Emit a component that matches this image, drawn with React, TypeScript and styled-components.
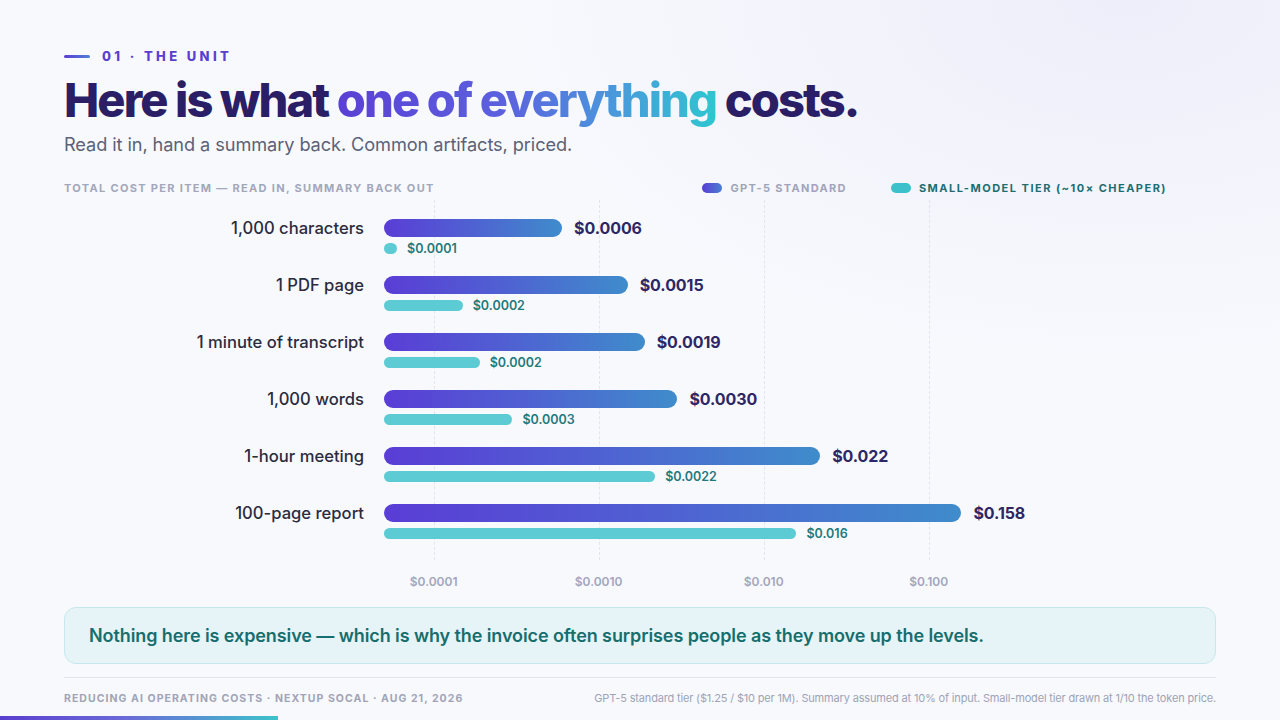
import React from "react";
import styled, { createGlobalStyle } from "styled-components";

const GlobalStyle = createGlobalStyle`
  html, body {
    margin: 0;
    padding: 0;
    background: #f8f9fd;
  }
  body {
    font-family: Inter, "Noto Sans", sans-serif;
    -webkit-font-smoothing: antialiased;
  }
`;

const MIN = Math.log10(0.00005);
const DECADE = 165;
const TRACK = 825;

const px = (v: number) => (Math.log10(v) - MIN) * DECADE;

type Item = { label: string; main: number; mainText: string; small: number; smallText: string };

const items: Item[] = [
  { label: "1,000 characters", main: 0.0006, mainText: "$0.0006", small: 0.00006, smallText: "$0.0001" },
  { label: "1 PDF page", main: 0.0015, mainText: "$0.0015", small: 0.00015, smallText: "$0.0002" },
  { label: "1 minute of transcript", main: 0.0019, mainText: "$0.0019", small: 0.00019, smallText: "$0.0002" },
  { label: "1,000 words", main: 0.003, mainText: "$0.0030", small: 0.0003, smallText: "$0.0003" },
  { label: "1-hour meeting", main: 0.022, mainText: "$0.022", small: 0.0022, smallText: "$0.0022" },
  { label: "100-page report", main: 0.158, mainText: "$0.158", small: 0.0158, smallText: "$0.016" },
];

const ticks = [
  { v: 0.0001, t: "$0.0001" },
  { v: 0.001, t: "$0.0010" },
  { v: 0.01, t: "$0.010" },
  { v: 0.1, t: "$0.100" },
];

const Slide = styled.div`
  position: relative;
  width: 1280px;
  height: 720px;
  overflow: hidden;
  box-sizing: border-box;
  padding: 47px 64px 0;
  display: flex;
  flex-direction: column;
  background:
    radial-gradient(ellipse 620px 360px at 88% 0%, #eeeefa 0%, rgba(248, 249, 253, 0) 100%),
    #f8f9fd;
`;

const Eyebrow = styled.div`
  display: flex;
  align-items: center;
  gap: 12px;
  height: 18px;
`;

const EyebrowLine = styled.span`
  width: 26px;
  height: 3px;
  border-radius: 2px;
  background: linear-gradient(90deg, #5a3fd0, #4f7fd8);
`;

const EyebrowText = styled.span`
  font-size: 13px;
  font-weight: 800;
  letter-spacing: 0.26em;
  color: #5a3fd0;
`;

const Title = styled.h1`
  margin: 7px 0 0;
  font-size: 47px;
  line-height: 56px;
  font-weight: 800;
  letter-spacing: -0.04em;
  color: #2a1f66;
`;

const Accent = styled.span`
  background: linear-gradient(90deg, #5a3fd6 0%, #5c62de 45%, #4a97dc 72%, #2fc6d0 100%);
  -webkit-background-clip: text;
  background-clip: text;
  color: transparent;
`;

const Subtitle = styled.p`
  margin: 3px 0 0;
  font-size: 18.2px;
  line-height: 26px;
  font-weight: 400;
  color: #5b6178;
  letter-spacing: -0.005em;
`;

const ChartHead = styled.div`
  margin-top: 23px;
  display: flex;
  align-items: center;
  height: 16px;
`;

const Caps = styled.span<{ $color: string; $size?: number; $track?: number }>`
  font-size: ${(p) => p.$size ?? 11}px;
  font-weight: 700;
  letter-spacing: ${(p) => p.$track ?? 0.12}em;
  color: ${(p) => p.$color};
  text-transform: uppercase;
`;

const Legend = styled.div`
  margin-left: auto;
  margin-right: 49px;
  display: flex;
  align-items: center;
  gap: 44px;
`;

const LegendItem = styled.div`
  display: flex;
  align-items: center;
  gap: 8px;
`;

const Swatch = styled.span<{ $bg: string }>`
  width: 20px;
  height: 10px;
  border-radius: 5px;
  background: ${(p) => p.$bg};
`;

const Plot = styled.div`
  position: relative;
  margin-top: 4px;
  padding: 19px 0 21px;
  display: flex;
  flex-direction: column;
  gap: 22px;
`;

const GridLayer = styled.div`
  position: absolute;
  top: 0;
  bottom: 0;
  left: 320px;
  width: ${TRACK}px;
  pointer-events: none;
`;

const GridLine = styled.span`
  position: absolute;
  top: 0;
  bottom: 0;
  width: 0;
  border-left: 1px dashed #e2e4ee;
`;

const Row = styled.div`
  position: relative;
  display: grid;
  grid-template-columns: 300px ${TRACK}px;
  column-gap: 20px;
  row-gap: 6px;
`;

const RowLabel = styled.div`
  text-align: right;
  font-size: 16.6px;
  line-height: 18px;
  font-weight: 500;
  color: #2b2b40;
`;

const BarLine = styled.div`
  display: flex;
  align-items: center;
  gap: 12px;
  height: 18px;
`;

const MainBar = styled.div`
  height: 18px;
  border-radius: 9px;
  background: linear-gradient(90deg, #5a3dd6 0%, #4f62d2 50%, #3f8ccb 100%);
`;

const MainValue = styled.span`
  font-size: 16px;
  font-weight: 700;
  color: #2d2766;
  letter-spacing: -0.005em;
`;

const SmallLine = styled.div`
  grid-column: 2;
  display: flex;
  align-items: center;
  gap: 10px;
  height: 11px;
`;

const SmallBar = styled.div`
  height: 11px;
  border-radius: 6px;
  background: #5ccbd3;
`;

const SmallValue = styled.span`
  font-size: 12.5px;
  font-weight: 600;
  color: #1f7a7c;
`;

const Axis = styled.div`
  position: relative;
  margin-left: 320px;
  width: ${TRACK}px;
  height: 16px;
  margin-top: 14px;
`;

const Tick = styled.span`
  position: absolute;
  top: 0;
  transform: translateX(-50%);
  font-size: 12px;
  font-weight: 600;
  color: #a2a6bb;
`;

const Callout = styled.div`
  margin-top: 17px;
  height: 57px;
  box-sizing: border-box;
  border: 1px solid #c6e8ec;
  border-radius: 12px;
  background: #e6f4f7;
  display: flex;
  align-items: center;
  padding: 0 24px;
  font-size: 18px;
  font-weight: 600;
  color: #166e6e;
  letter-spacing: -0.005em;
`;

const Footer = styled.div`
  margin-top: 13px;
  border-top: 1px solid #e2e5ee;
  padding-top: 13px;
  display: flex;
  justify-content: space-between;
  align-items: center;
`;

const FootNote = styled.span`
  font-size: 11px;
  color: #9ea3b6;
  letter-spacing: -0.015em;
`;

const Progress = styled.div`
  position: absolute;
  left: 0;
  bottom: 0;
  width: 278px;
  height: 4px;
  background: linear-gradient(90deg, #5a3fcf 0%, #6a6ad8 45%, #3cc3ca 100%);
`;

export default function App() {
  return (
    <>
      <GlobalStyle />
      <Slide>
        <Eyebrow>
          <EyebrowLine />
          <EyebrowText>01 · THE UNIT</EyebrowText>
        </Eyebrow>
        <Title>
          Here is what <Accent>one of everything</Accent> costs.
        </Title>
        <Subtitle>Read it in, hand a summary back. Common artifacts, priced.</Subtitle>

        <ChartHead>
          <Caps $color="#a3a7bb">Total cost per item — read in, summary back out</Caps>
          <Legend>
            <LegendItem>
              <Swatch $bg="linear-gradient(90deg, #5a3dd6, #4a7fd0)" />
              <Caps $color="#a0a4b8" $track={0.12}>GPT-5 standard</Caps>
            </LegendItem>
            <LegendItem>
              <Swatch $bg="#3cc1ca" />
              <Caps $color="#1d6e72" $track={0.135}>Small-model tier (~10× cheaper)</Caps>
            </LegendItem>
          </Legend>
        </ChartHead>

        <Plot>
          <GridLayer>
            {ticks.map((t) => (
              <GridLine key={t.t} style={{ left: px(t.v) }} />
            ))}
          </GridLayer>
          {items.map((it) => (
            <Row key={it.label}>
              <RowLabel>{it.label}</RowLabel>
              <BarLine>
                <MainBar style={{ width: px(it.main) }} />
                <MainValue>{it.mainText}</MainValue>
              </BarLine>
              <SmallLine>
                <SmallBar style={{ width: Math.max(px(it.small), 12) }} />
                <SmallValue>{it.smallText}</SmallValue>
              </SmallLine>
            </Row>
          ))}
        </Plot>

        <Axis>
          {ticks.map((t) => (
            <Tick key={t.t} style={{ left: px(t.v) }}>
              {t.t}
            </Tick>
          ))}
        </Axis>

        <Callout>
          Nothing here is expensive — which is why the invoice often surprises people as they move up the levels.
        </Callout>

        <Footer>
          <Caps $color="#a0a4b6" $size={10.5} $track={0.1}>
            Reducing AI operating costs · NextUp SoCal · Aug 21, 2026
          </Caps>
          <FootNote>
            GPT-5 standard tier ($1.25 / $10 per 1M). Summary assumed at 10% of input. Small-model tier drawn at 1/10
            the token price.
          </FootNote>
        </Footer>
        <Progress />
      </Slide>
    </>
  );
}
